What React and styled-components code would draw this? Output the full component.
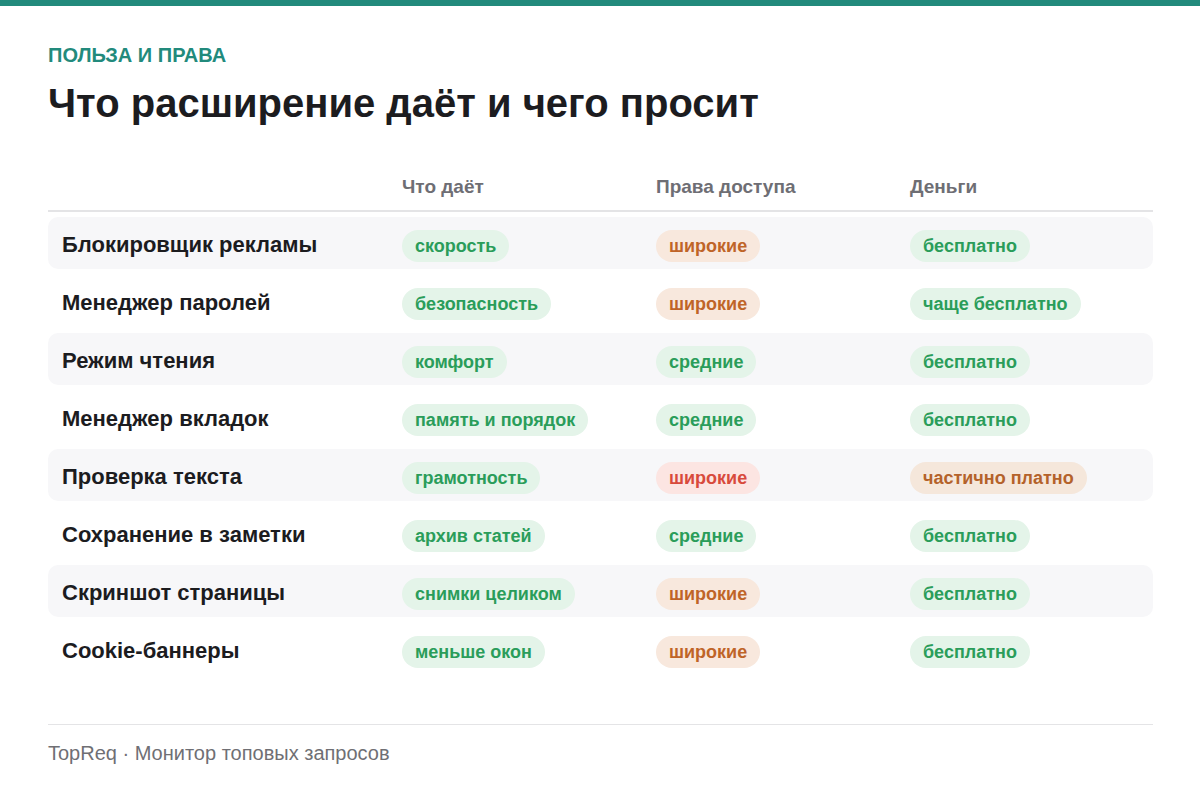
import React from 'react';
import styled, { createGlobalStyle } from 'styled-components';

const GlobalStyle = createGlobalStyle`
  html, body {
    margin: 0;
    padding: 0;
    background: #ffffff;
  }
  body {
    font-family: "Liberation Sans", Arial, sans-serif;
    color: #1c1c1f;
  }
`;

const Page = styled.div`
  width: 1200px;
  height: 786px;
  background: #ffffff;
  border-top: 6px solid #228a7c;
  box-sizing: border-box;
`;

const Content = styled.div`
  padding: 37px 47px 0 48px;
`;

const Eyebrow = styled.div`
  font-size: 20px;
  line-height: 24px;
  font-weight: 700;
  color: #228a7c;
`;

const Title = styled.h1`
  margin: 12px 0 0;
  font-size: 40px;
  line-height: 48px;
  font-weight: 700;
  color: #1c1c1f;
`;

const Table = styled.div`
  margin-top: 49px;
  display: flex;
  flex-direction: column;
  gap: 6px;
`;

const Grid = styled.div`
  display: grid;
  grid-template-columns: 340px 254px 254px 1fr;
  align-items: center;
`;

const HeadRow = styled(Grid)`
  border-bottom: 2px solid #e4e4e6;
  padding-bottom: 12px;
  margin-bottom: -1px;
`;

const HeadCell = styled.div`
  padding-left: 14px;
  font-size: 19px;
  line-height: 22px;
  font-weight: 700;
  color: #6e6e74;
`;

const Row = styled(Grid)`
  height: 52px;
  border-radius: 10px;
  background: ${(p) => (p.$striped ? '#f7f7f9' : 'transparent')};
`;

const Name = styled.div`
  padding: 3px 0 0 14px;
  font-size: 22px;
  font-weight: 700;
  color: #1c1c1f;
`;

const Cell = styled.div`
  padding: 6px 0 0 14px;
  display: flex;
`;

const tones = {
  green: { fg: '#2a9d5a', bg: '#e4f4e9' },
  orange: { fg: '#bf6428', bg: '#f8e8dd' },
  red: { fg: '#d84a3c', bg: '#fce5e2' },
  tan: { fg: '#b4622a', bg: '#f5e7db' },
};

const Pill = styled.span`
  display: inline-flex;
  align-items: center;
  height: 32px;
  padding: 0 13px;
  border-radius: 16px;
  font-size: 18px;
  font-weight: 700;
  color: ${(p) => tones[p.$tone].fg};
  background: ${(p) => tones[p.$tone].bg};
  white-space: nowrap;
`;

const Footer = styled.div`
  margin-top: 49px;
  border-top: 1px solid #e4e4e6;
  padding-top: 16px;
  font-size: 20px;
  line-height: 24px;
  color: #6f6f74;
`;

const rows = [
  ['Блокировщик рекламы', 'скорость', ['широкие', 'orange'], ['бесплатно', 'green']],
  ['Менеджер паролей', 'безопасность', ['широкие', 'orange'], ['чаще бесплатно', 'green']],
  ['Режим чтения', 'комфорт', ['средние', 'green'], ['бесплатно', 'green']],
  ['Менеджер вкладок', 'память и порядок', ['средние', 'green'], ['бесплатно', 'green']],
  ['Проверка текста', 'грамотность', ['широкие', 'red'], ['частично платно', 'tan']],
  ['Сохранение в заметки', 'архив статей', ['средние', 'green'], ['бесплатно', 'green']],
  ['Скриншот страницы', 'снимки целиком', ['широкие', 'orange'], ['бесплатно', 'green']],
  ['Cookie-баннеры', 'меньше окон', ['широкие', 'orange'], ['бесплатно', 'green']],
];

export default function App() {
  return (
    <Page>
      <GlobalStyle />
      <Content>
        <Eyebrow>ПОЛЬЗА И ПРАВА</Eyebrow>
        <Title>Что расширение даёт и чего просит</Title>
        <Table>
          <HeadRow>
            <HeadCell />
            <HeadCell>Что даёт</HeadCell>
            <HeadCell>Права доступа</HeadCell>
            <HeadCell>Деньги</HeadCell>
          </HeadRow>
          {rows.map(([name, gives, access, money], i) => (
            <Row key={name} $striped={i % 2 === 0}>
              <Name>{name}</Name>
              <Cell><Pill $tone="green">{gives}</Pill></Cell>
              <Cell><Pill $tone={access[1]}>{access[0]}</Pill></Cell>
              <Cell><Pill $tone={money[1]}>{money[0]}</Pill></Cell>
            </Row>
          ))}
        </Table>
        <Footer>TopReq · Монитор топовых запросов</Footer>
      </Content>
    </Page>
  );
}
